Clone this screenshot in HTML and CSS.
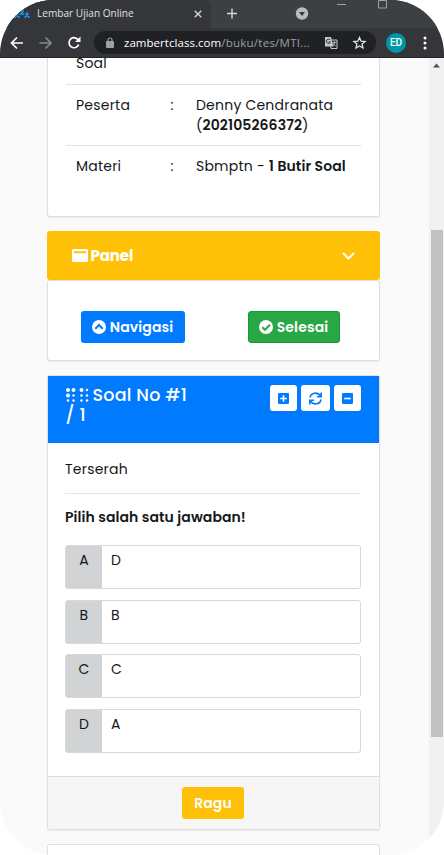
FILE: index.html
```html
<!DOCTYPE html>
<html lang="id">
<head>
<meta charset="utf-8">
<title>Lembar Ujian Online</title>
<link rel="stylesheet" href="styles.css">
</head>
<body>
<div class="window">
  <header class="browser">
    <div class="tabs">
      <div class="tab">
        <svg class="favicon" width="17" height="10" viewBox="0 0 17 10"><g fill="#168fe8"><circle cx="8" cy="2" r="2"/><circle cx="3" cy="5" r="1.7"/><circle cx="13" cy="5" r="1.7"/><path d="M0 9q0-3 3-2.5Q6 6 6 9H4V8H2v1zM5.500 5Q8 3 10.500 5v1h-5zM10 9q0-3 3-2.500Q16 6 16 9h-2V8h-2v1z"/></g></svg>
        <span class="tab-title">Lembar Ujian Online</span>
        <svg class="close" width="8" height="8" viewBox="0 0 8 8"><path d="M.7.7l6.600 6.600M7.300.7L.7 7.300" stroke="#d0d2d4" stroke-width="1.400"/></svg>
      </div>
      <svg class="tab-tools" width="233" height="28" viewBox="211 0 233 28"><path d="M232 8.500v10M227 13.500h10" stroke="#d5d7d9" stroke-width="1.400"/><circle cx="302" cy="13.500" r="6.200" fill="#b9bbbd"/><path d="M299 12h6l-3 4z" fill="#35363a"/><path d="M337 4.500h9M378.500 .5h8v7.500h-8z" fill="none" stroke="#a0a3a5"/></svg>
    </div>
    <div class="toolbar">
      <svg class="nav-icons" width="94" height="29" viewBox="0 28 94 29" fill="none" stroke-width="1.700"><path d="M23 43H12M17 37.500L11.500 43l5.500 5.500" stroke="#fff"/><path d="M39.500 43H51M45.500 37.500L51 43l-5.500 5.500" stroke="#86888b"/><path d="M78.500 40.500a5 5 0 1 0 .2 4" stroke="#fff"/><path d="M80.500 36.500v5.500H75z" fill="#fff"/></svg>
      <div class="address">
        <svg width="8" height="11" viewBox="0 0 8 11"><rect y="4" width="8" height="7" rx="1" fill="#9aa0a6"/><path d="M2 5V3a2 2 0 0 1 4 0v2" fill="none" stroke="#9aa0a6" stroke-width="1.200"/></svg>
        <span class="url">zambertclass.com<span>/buku/tes/MTI...</span></span>
        <svg class="url-icons" width="46" height="14" viewBox="0 0 46 14"><path d="M6 4h7v8.500H7z" fill="none" stroke="#c5c7c9"/><path d="M1 1h6l2.500 9.500H1z" fill="#c5c7c9"/><path d="M6.200 4A2.100 2.100 0 1 0 6.500 6H4.500" fill="none" stroke="#303134"/><path d="M8.500 6.500h4M10.500 5v1.500q0 2-1.500 3.500M9.500 7.500l2.500 3" fill="none" stroke="#c5c7c9" stroke-width=".8"/><path d="M35.500 1.500l1.600 3.700 4 .3-3 2.600.9 3.900-3.500-2.100L32 12l.9-3.900-3-2.600 4-.3z" fill="none" stroke="#dfe1e5" stroke-width="1.300"/></svg>
      </div>
      <span class="avatar">ED</span>
      <svg class="menu" width="4" height="14" viewBox="0 0 4 14" fill="#fff"><circle cx="2" cy="2" r="1.500"/><circle cx="2" cy="7" r="1.500"/><circle cx="2" cy="12" r="1.500"/></svg>
    </div>
  </header>
  <div class="viewport">
    <main>
      <section class="card info">
        <div class="row first"><span>Soal</span></div>
        <div class="row two"><span>Peserta</span><span>:</span><span>Denny Cendranata<br>(<b>202105266372</b>)</span></div>
        <div class="row"><span>Materi</span><span>:</span><span>Sbmptn - <b>1 Butir Soal</b></span></div>
      </section>
      <section class="panel">
        <div class="panel-head">
          <svg width="16" height="13" viewBox="0 0 16 13"><path fill="#fff" fill-rule="evenodd" d="M1.500 0h13Q16 0 16 1.500v10Q16 13 14.500 13h-13Q0 13 0 11.500v-10Q0 0 1.500 0zM2 2.200v2h12v-2z"/></svg>
          <b>Panel</b>
          <svg class="chevron" width="13" height="8" viewBox="0 0 13 8"><path d="M1 1l5.500 5.500L12 1" fill="none" stroke="#fff" stroke-width="2"/></svg>
        </div>
        <div class="card panel-body">
          <button class="btn blue"><svg width="14" height="14" viewBox="0 0 14 14"><circle cx="7" cy="7" r="7" fill="#fff"/><path d="M3.300 8.700L7 5l3.700 3.700" fill="none" stroke="#007bff" stroke-width="2"/></svg><span>Navigasi</span></button>
          <button class="btn green"><svg width="14" height="14" viewBox="0 0 14 14"><circle cx="7" cy="7" r="7" fill="#fff"/><path d="M3.300 7.200L6 9.800l5-5" fill="none" stroke="#28a745" stroke-width="2"/></svg><span>Selesai</span></button>
        </div>
      </section>
      <section class="card question">
        <div class="question-head">
          <h1><svg width="23" height="14" viewBox="0 0 23 14" fill="#fff"><circle cx="2" cy="2" r="2"/><circle cx="7.500" cy="2" r="2"/><circle cx="15.500" cy="2" r="2"/><circle cx="21" cy="2" r="1.200"/><circle cx="2" cy="7.500" r="2"/><circle cx="7.500" cy="7.500" r="1.200"/><circle cx="15.500" cy="7.500" r="1.200"/><circle cx="21" cy="7.500" r="1.200"/><circle cx="2" cy="12.500" r="1.200"/><circle cx="7.500" cy="12.500" r="1.200"/><circle cx="15.500" cy="12.500" r="1.200"/><circle cx="21" cy="12.500" r="1.200"/></svg><span>Soal No #1</span><br><span>/ 1</span></h1>
          <div class="tools">
            <button><svg width="11" height="11" viewBox="0 0 11 11"><rect width="11" height="11" rx="1.300" fill="#007bff"/><path d="M5.500 2.200v6.600M2.200 5.500h6.600" stroke="#fff" stroke-width="1.600"/></svg></button>
            <button class="wide"><svg width="13" height="13" viewBox="0 0 13 13" fill="none" stroke="#007bff" stroke-width="1.600"><path d="M1 5.500C2 .5 8.500-.5 11.500 4M12 7.500C11 12.500 4.500 13.500 1.500 9M12.200.5v4.300H8M.8 12.500V8.200H5"/></svg></button>
            <button><svg width="11" height="11" viewBox="0 0 11 11"><rect width="11" height="11" rx="1.300" fill="#007bff"/><path d="M2.200 5.500h6.600" stroke="#fff" stroke-width="1.600"/></svg></button>
          </div>
        </div>
        <div class="question-body">
          <p class="prompt">Terserah</p>
          <p class="instruction">Pilih salah satu jawaban!</p>
          <div class="answers">
            <div class="answer"><span>A</span><span>D</span></div>
            <div class="answer"><span>B</span><span>B</span></div>
            <div class="answer"><span>C</span><span>C</span></div>
            <div class="answer"><span>D</span><span>A</span></div>
          </div>
        </div>
        <div class="question-foot"><button class="btn yellow"><span>Ragu</span></button></div>
      </section>
      <section class="card next"></section>
    </main>
    <aside class="scrollbar"><svg width="15" height="17" viewBox="0 0 15 17"><path d="M4 9.500h7L7.500 5.500z" fill="#505050"/></svg><div class="thumb"></div></aside>
  </div>
</div>
</body>
</html>
```
FILE: styles.css
```css
* { box-sizing: border-box; }
body { margin: 0; background: #fff; font: 14px/20px Poppins, Inter, sans-serif; letter-spacing: .22px; color: #15181b; overflow: hidden; }
b { font-weight: 600; letter-spacing: .1px; }
svg { display: block; flex: none; }
button { font: inherit; letter-spacing: inherit; }
.window { height: 855px; border-radius: 54px; overflow: hidden; display: flex; flex-direction: column; }

.browser { height: 58px; flex: none; background: #35363a; border-bottom: 1px solid #242528; font: 11px "Open Sans", sans-serif; letter-spacing: 0; }
.tabs { height: 28px; display: flex; background: #3c4043; }
.tab { width: 211px; background: #35363a; border-radius: 0 6px 0 0; display: flex; align-items: center; padding: 0 9px 1px 14px; color: #dfe1e3; }
.tab-title { margin: -1px 0 0 6px; white-space: nowrap; font-size: 10.100px; }
.close { margin-left: auto; }
.toolbar { height: 29px; display: flex; align-items: center; }
.address { width: 282px; height: 23px; border-radius: 12px; background: #202124; display: flex; align-items: center; padding: 0 10px 0 12px; }
.url { margin-left: 10px; color: #fff; font-size: 11.500px; font-weight: 500; letter-spacing: .04px; white-space: nowrap; }
.url span { color: #9aa0a6; font-weight: 400; letter-spacing: .25px; }
.url-icons { margin: 0 -4px 0 auto; }
.avatar { width: 20px; height: 20px; border-radius: 50%; background: #0097a7; color: #fff; text-align: center; font: 500 10px/20px Roboto, sans-serif; margin-left: 10px; }
.menu { margin-left: 17px; }

.viewport { flex: 1; display: flex; min-height: 0; }
main { flex: 1; background: #fafafa; padding: 0 49.500px 0 46.500px; display: flex; flex-direction: column; overflow: hidden; }
.card { background: #fff; border: 1px solid #dfdfdf; border-radius: 3px; box-shadow: 0 1px 2px #00000012; }
.info { height: 159px; flex: none; border-top: 0; border-radius: 0 0 3px 3px; padding: 0 18px; }
.row { display: grid; grid-template-columns: 94.500px 25.500px 1fr; padding: 10px 0 0 10.500px; height: 61px; white-space: nowrap; }
.row.first { height: 27px; border-bottom: 1px solid #dee2e6; padding-top: 0; }
.first span { margin-top: -5px; }
.row.two { border-bottom: 1px solid #dee2e6; }

.panel { margin-top: 14px; }
.panel-head { height: 49px; border-radius: 3px; background: #ffc107; color: #fff; display: flex; align-items: center; padding: 0 25px; font-size: 15px; }
.panel-head b { margin-left: 3px; font-weight: 700; letter-spacing: -.1px; }
.chevron { margin-left: auto; }
.panel-body { height: 81px; padding: 30px 39px 0 33px; display: flex; justify-content: space-between; }
.btn { height: 32px; border: 0; border-radius: 3px; display: flex; align-items: center; justify-content: center; gap: 4px; padding: 0; color: #fff; font-weight: 600; letter-spacing: .12px; }
.blue { width: 104px; background: #007bff; }
.green { width: 92px; background: #28a745; border: 1px solid #18973a; }
.yellow { width: 62px; background: #ffc107; }

.question { margin-top: 14px; height: 455px; flex: none; display: flex; flex-direction: column; }
.question-head { height: 67px; flex: none; background: #007bff; padding: 9px 17.500px 0 18px; display: flex; justify-content: space-between; }
h1 { margin: 0; color: #fff; font-size: 17.500px; line-height: 20px; font-weight: 500; white-space: nowrap; }
h1 svg { display: inline-block; vertical-align: -1px; margin-right: 4px; }
.tools { display: flex; gap: 4px; }
.tools button { width: 27px; height: 26px; padding: 0; border: 0; border-radius: 3px; background: #fff; display: grid; place-items: center; }
.tools .wide { width: 29px; }
.question-body { flex: 1; padding: 16px 17.500px 0; }
.prompt { margin: 0; height: 35px; border-bottom: 1px solid #e5e5e5; }
.instruction { margin: 13px 0 18px; font-weight: 600; letter-spacing: .08px; white-space: nowrap; }
.answers { display: grid; gap: 10.700px; }
.answer { height: 44px; border: 1px solid #d6d8db; border-radius: 3px; display: flex; }
.answer span { padding: 4px 9px; }
.answer span:first-child { width: 36px; background: #d1d3d5; padding: 4px 0; text-align: center; }
.question-foot { height: 53px; flex: none; border-top: 1px solid #dcdcdc; background: #f6f6f6; display: flex; justify-content: center; padding-top: 10px; }
.next { margin-top: 14px; height: 60px; flex: none; }
.scrollbar { width: 15px; background: #f1f1f1; }
.thumb { width: 12px; height: 507px; margin: 155px 0 0 2px; background: #c1c1c1; }
```
